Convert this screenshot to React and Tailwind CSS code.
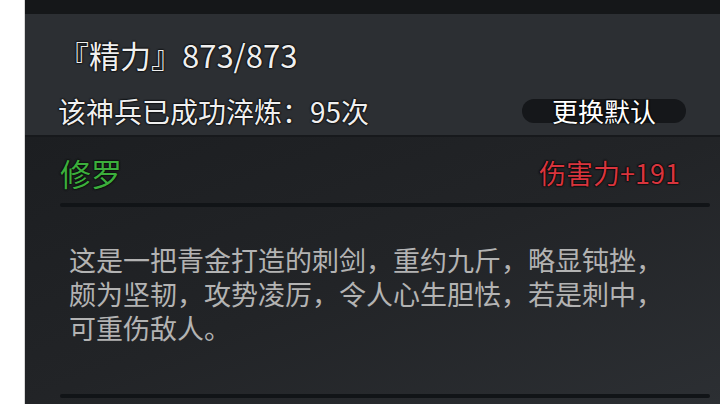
export default function App() {
  const font = { fontFamily: '"Noto Sans CJK SC", "Noto Sans", sans-serif' };
  return (
    <div className="w-[720px] h-[404px] flex bg-white overflow-hidden" style={font}>
      <div className="w-[25px] shrink-0 bg-white border-r border-[#d8d8d8]" />
      <div className="flex-1 flex flex-col min-w-0">
        <div className="h-[14px] shrink-0 bg-[#151719]" />
        <div className="h-[123px] shrink-0 bg-[#2c2f33] border-b-2 border-[#17191c] pl-[33px] pr-[34px] pt-[22px]">
          <div className="text-[31px] leading-[38px] text-[#efefef] [text-shadow:0_0_2px_#000,0_0_2px_#000,0_0_1px_#000] whitespace-nowrap">
            『精力』873/873
          </div>
          <div className="mt-[20px] flex items-center justify-between">
            <div className="text-[28px] leading-[34px] text-[#efefef] [text-shadow:0_0_2px_#000,0_0_2px_#000,0_0_1px_#000] whitespace-nowrap">
              该神兵已成功淬炼：95次
            </div>
            <div className="w-[164px] h-[24px] rounded-full bg-[#15171a] flex items-center justify-center">
              <span className="text-[26px] leading-none text-white [text-shadow:0_0_2px_#000,0_0_2px_#000,0_0_1px_#000]">
                更换默认
              </span>
            </div>
          </div>
        </div>
        <div className="flex-1 bg-gradient-to-br from-[#1c1e21] via-[#222427] to-[#2c2f33] pt-[18px]">
          <div className="pl-[35px] pr-[40px] flex items-center justify-between">
            <div className="text-[31px] leading-[36px] text-[#3cae3c] [text-shadow:0_0_2px_#000,0_0_2px_#000]">
              修罗
            </div>
            <div className="text-[27px] leading-[36px] text-[#d8353e] [text-shadow:0_0_2px_#000,0_0_2px_#000,0_0_1px_#000]">
              伤害力+191
            </div>
          </div>
          <div className="mt-[12px] ml-[35px] mr-[10px] h-[4px] rounded-full bg-[#111417]" />
          <p className="mt-[36px] ml-[44px] text-[27px] leading-[34px] text-[#b3b3b3] whitespace-nowrap">
            这是一把青金打造的刺剑，重约九斤，略显钝挫，<br />
            颇为坚韧，攻势凌厉，令人心生胆怯，若是刺中，<br />
            可重伤敌人。
          </p>
          <div className="mt-[49px] ml-[35px] mr-[10px] h-[4px] rounded-full bg-[#111417]" />
        </div>
      </div>
    </div>
  );
}
